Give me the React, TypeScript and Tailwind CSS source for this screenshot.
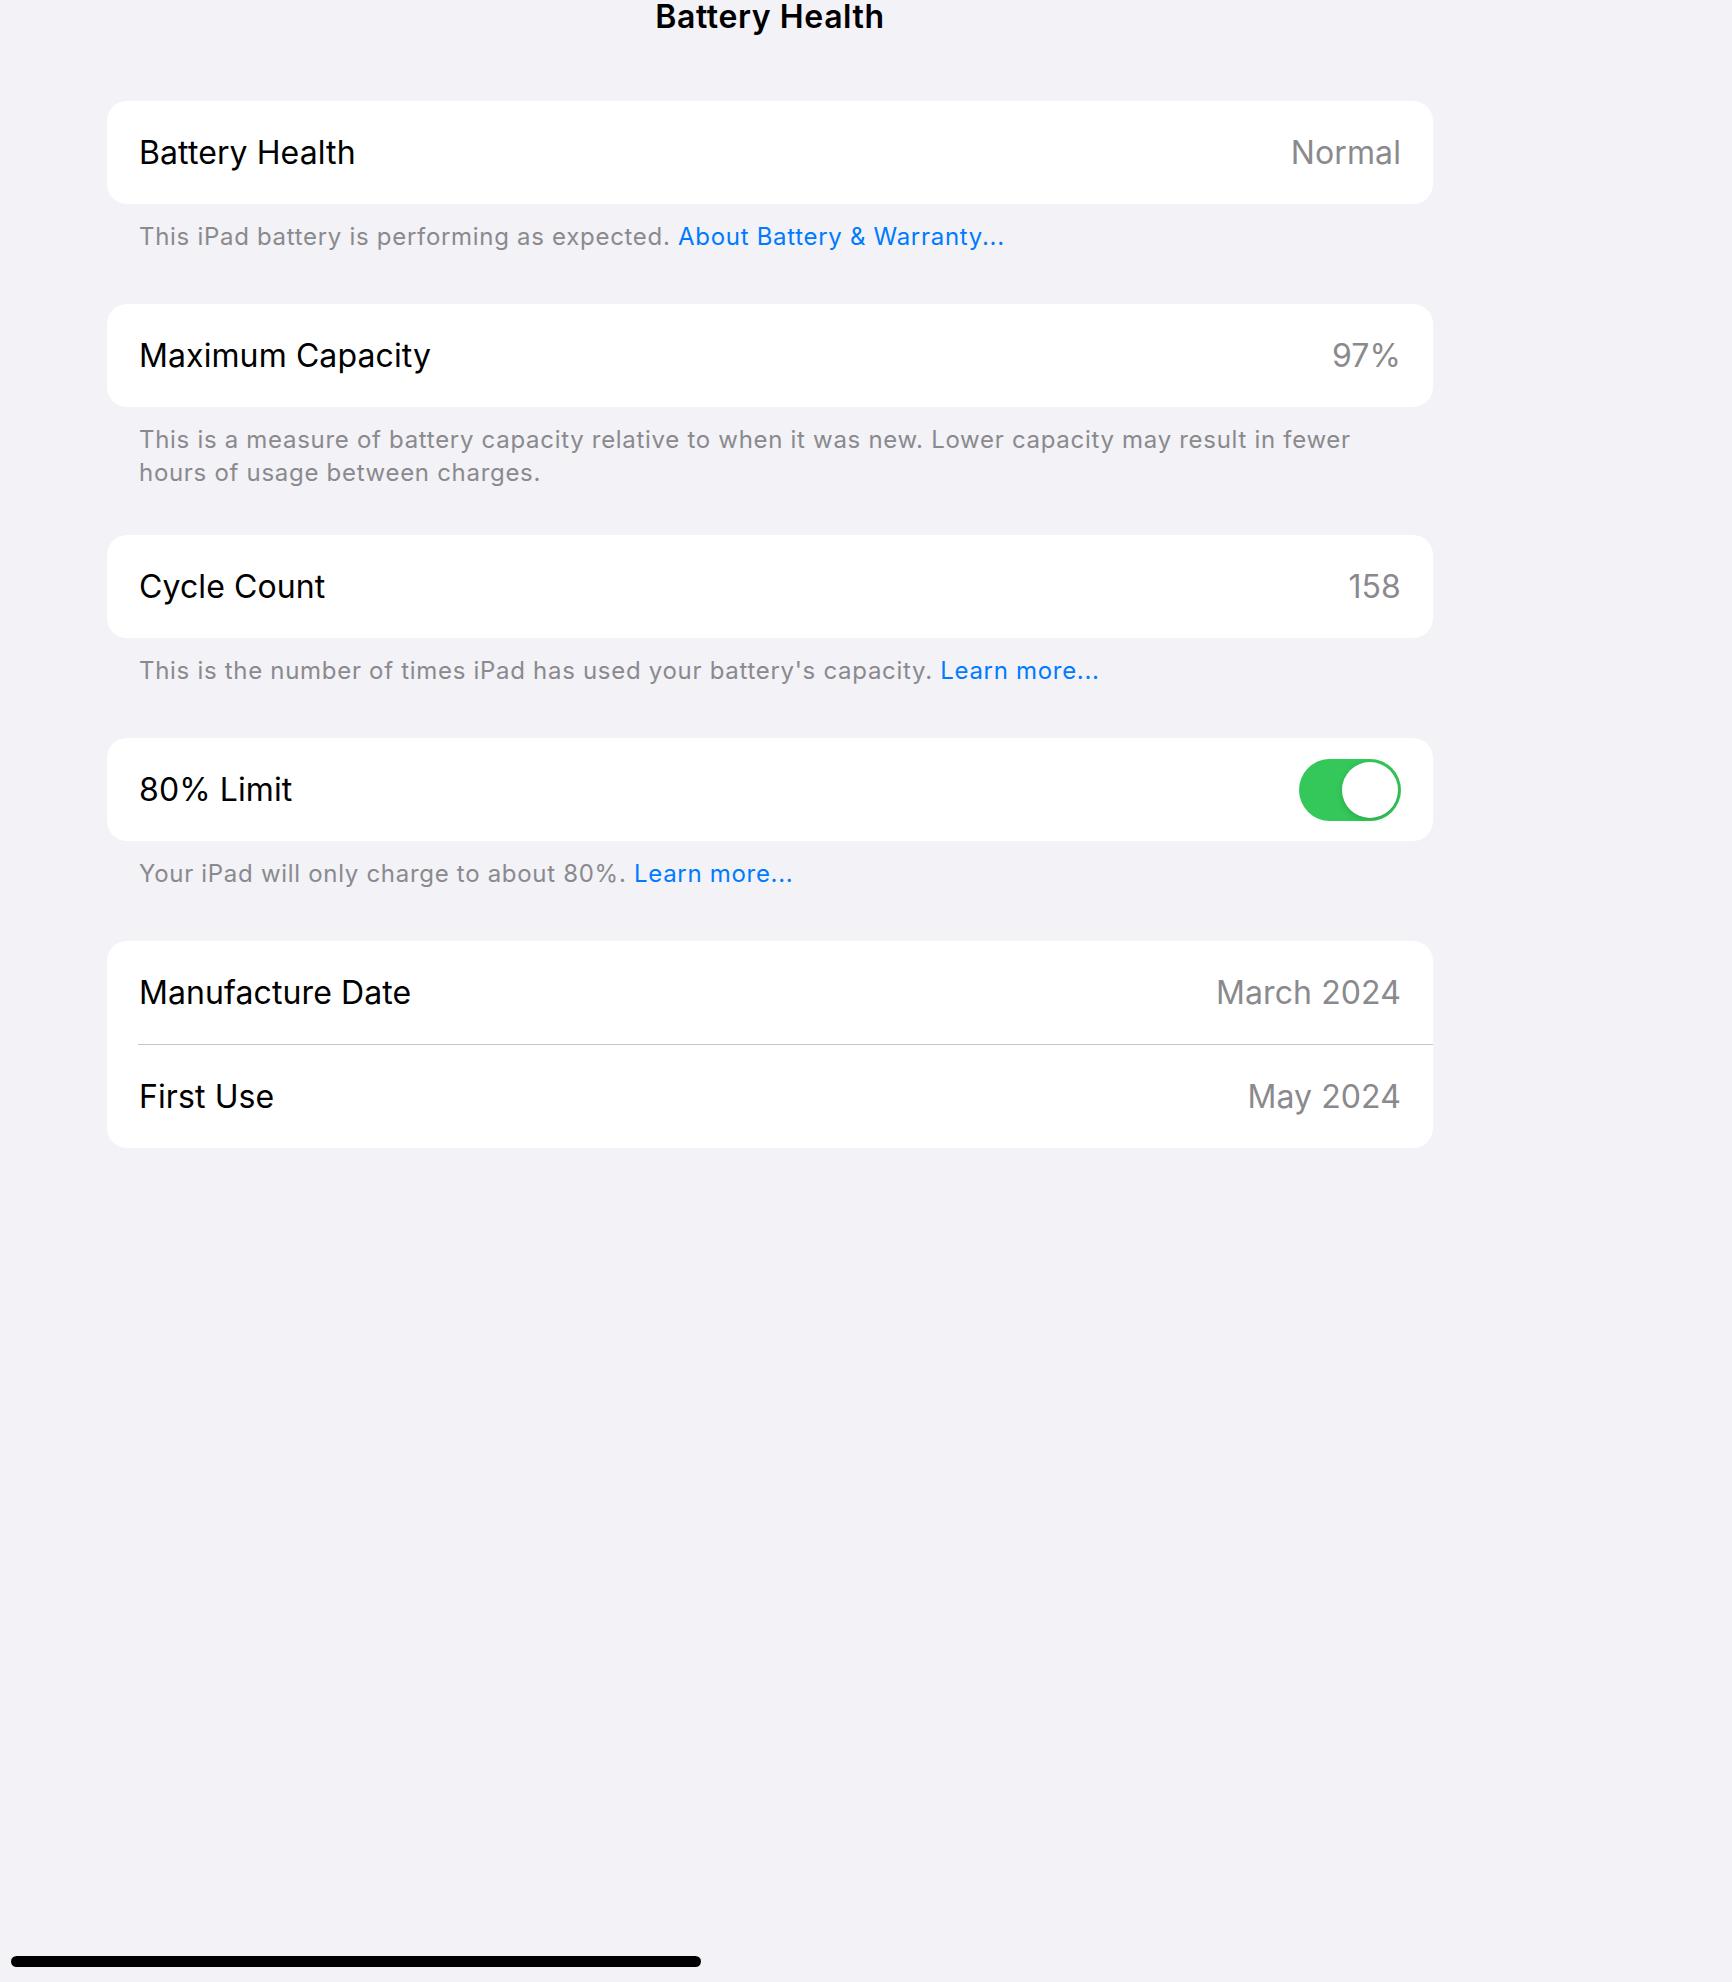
import React from "react";

const font = { fontFamily: "Inter, 'Noto Sans', sans-serif" };

function Row({ label, value, children }: { label: string; value?: string; children?: React.ReactNode }) {
  return (
    <div className="flex h-[103px] items-center justify-between px-[32px]">
      <span className="text-[32px] text-black tracking-[0.1px]">{label}</span>
      {value !== undefined ? (
        <span className="text-[32px] text-[#8a8a8e] tracking-[0.1px]">{value}</span>
      ) : (
        children
      )}
    </div>
  );
}

function Footer({ children, pb }: { children: React.ReactNode; pb: string }) {
  return (
    <div className={`px-[32px] pt-[16px] text-[24px] leading-[33px] text-[#8a8a8e] tracking-[0.7px] ${pb}`}>
      {children}
    </div>
  );
}

function Toggle() {
  return (
    <div className="flex h-[62px] w-[102px] items-center justify-end rounded-full bg-[#34c759] p-[3px]">
      <div className="h-[56px] w-[56px] rounded-full bg-white shadow-[0_2px_6px_rgba(0,0,0,0.15)]" />
    </div>
  );
}

const Link = ({ children }: { children: React.ReactNode }) => (
  <span className="text-[#007aff]">{children}</span>
);

export default function App() {
  return (
    <div className="flex min-h-[1982px] w-full flex-col bg-[#f2f2f7]" style={font}>
      <div className="pl-[107px]">
        <div className="w-[1326px]">
          <div className="pt-[1px] text-center text-[32px] font-semibold leading-[32px] text-black tracking-[0.6px]">
            Battery Health
          </div>
          <div className="h-[68px]" />

          <div className="overflow-hidden rounded-[20px] bg-white">
            <Row label="Battery Health" value="Normal" />
          </div>
          <Footer pb="pb-[51px]">
            This iPad battery is performing as expected. <Link>About Battery &amp; Warranty...</Link>
          </Footer>

          <div className="overflow-hidden rounded-[20px] bg-white">
            <Row label="Maximum Capacity" value="97%" />
          </div>
          <Footer pb="pb-[46px]">
            This is a measure of battery capacity relative to when it was new. Lower capacity may result in fewer
            <br />
            hours of usage between charges.
          </Footer>

          <div className="overflow-hidden rounded-[20px] bg-white">
            <Row label="Cycle Count" value="158" />
          </div>
          <Footer pb="pb-[51px]">
            This is the number of times iPad has used your battery's capacity. <Link>Learn more...</Link>
          </Footer>

          <div className="overflow-hidden rounded-[20px] bg-white">
            <Row label="80% Limit">
              <Toggle />
            </Row>
          </div>
          <Footer pb="pb-[51px]">
            Your iPad will only charge to about 80%. <Link>Learn more...</Link>
          </Footer>

          <div className="overflow-hidden rounded-[20px] bg-white">
            <Row label="Manufacture Date" value="March 2024" />
            <div className="ml-[31px] h-px bg-[#c6c6c8]" />
            <Row label="First Use" value="May 2024" />
          </div>
        </div>
      </div>

      <div className="mt-auto pb-[15px] pl-[11px]">
        <div className="h-[11px] w-[690px] rounded-full bg-black" />
      </div>
    </div>
  );
}
